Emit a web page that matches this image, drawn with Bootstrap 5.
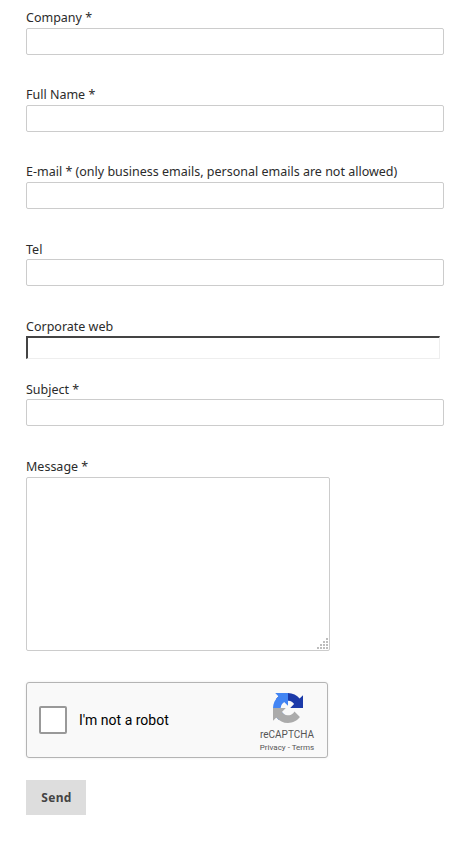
<!DOCTYPE html>
<html lang="en">
<head>
<meta charset="utf-8">
<title>Contact form</title>
<link rel="stylesheet" href="https://cdn.jsdelivr.net/npm/bootstrap@5.3.0/dist/css/bootstrap.min.css">
<style>
html, body { background: #fff; }
body { font-family: "Noto Sans", "Open Sans", sans-serif; font-size: 12.5px; color: #2b2b2b; overflow: hidden; }
.contact-form { padding: 8px 27px 0 26px; }
.field-block { margin-bottom: 30px; }
.field-block.tight { margin-bottom: 20px; }
.field-label { display: block; height: 20px; line-height: 19px; margin: 0; font-size: 12.5px; color: #2b2b2b; }
.field-label.label-low { padding-top: 1px; }
.field-input.form-control { height: 27px; min-height: 0; padding: 2px 6px; font-size: 13px; border: 1px solid #ccc; border-radius: 2px; box-shadow: none; }
.inset-input { display: block; width: 414px; height: 23px; padding: 1px 2px; background: #fff; border-style: solid; border-width: 2px 1px 1px 2px; border-color: #444 #eee #eee #444; border-radius: 0; outline: 0; }
.message-area.form-control { display: block; width: 304px; height: 174px; min-height: 0; margin-top: 1px; padding: 4px 6px; font-size: 13px; border: 1px solid #ccc; border-radius: 2px; resize: both; box-shadow: none; }
.message-area::-webkit-resizer { background: url("data:image/svg+xml,%3Csvg xmlns='http://www.w3.org/2000/svg' width='14' height='14'%3E%3Cg fill='%23bdbdbd'%3E%3Crect x='11' y='2' width='2' height='2'/%3E%3Crect x='11' y='5' width='2' height='2'/%3E%3Crect x='8' y='5' width='2' height='2'/%3E%3Crect x='11' y='8' width='2' height='2'/%3E%3Crect x='8' y='8' width='2' height='2'/%3E%3Crect x='5' y='8' width='2' height='2'/%3E%3Crect x='11' y='11' width='2' height='2'/%3E%3Crect x='8' y='11' width='2' height='2'/%3E%3Crect x='5' y='11' width='2' height='2'/%3E%3Crect x='2' y='11' width='2' height='2'/%3E%3C/g%3E%3C/svg%3E") no-repeat right bottom; }
.captcha-box { width: 302px; height: 76px; margin-top: 31px; margin-bottom: 22px; padding: 0 12px; background: #f9f9f9; border: 1px solid #b4b4b4; border-radius: 3px; box-shadow: 0 0 3px rgba(0,0,0,.08); font-family: Roboto, "Liberation Sans", sans-serif; color: #000; }
.captcha-check { width: 28px; height: 28px; background: #fff; border: 2px solid #999; border-radius: 2px; flex: none; }
.captcha-text { margin-left: 12px; font-size: 14px; }
.captcha-brand { width: 56px; padding-top: 10px; }
.captcha-logo { width: 30px; height: 30px; display: block; margin-left: 2px; }
.captcha-name { margin-top: 5px; font-size: 10px; line-height: 13px; color: #555; }
.captcha-links { margin-top: 1px; font-size: 8px; line-height: 12px; color: #555; white-space: nowrap; }
.send-btn.btn { width: 60px; height: 35px; padding: 0 0 0 1px; font-size: 12px; font-weight: 700; letter-spacing: .3px; color: #444; background: #ddd; border: 1px solid #ddd; border-radius: 0; }
</style>
</head>
<body>
<form class="contact-form" onsubmit="return false">
  <div class="field-block">
    <label class="field-label" for="f1">Company *</label>
    <input id="f1" class="form-control field-input" type="text">
  </div>
  <div class="field-block">
    <label class="field-label" for="f2">Full Name *</label>
    <input id="f2" class="form-control field-input" type="text">
  </div>
  <div class="field-block">
    <label class="field-label" for="f3">E-mail * (only business emails, personal emails are not allowed)</label>
    <input id="f3" class="form-control field-input" type="text">
  </div>
  <div class="field-block">
    <label class="field-label label-low" for="f4">Tel</label>
    <input id="f4" class="form-control field-input" type="text">
  </div>
  <div class="field-block tight">
    <label class="field-label label-low" for="f5">Corporate web</label>
    <input id="f5" class="inset-input" type="text">
  </div>
  <div class="field-block">
    <label class="field-label label-low" for="f6">Subject *</label>
    <input id="f6" class="form-control field-input" type="text">
  </div>
  <div>
    <label class="field-label label-low" for="f7">Message *</label>
    <textarea id="f7" class="form-control message-area"></textarea>
  </div>
  <div class="captcha-box d-flex align-items-start">
    <div class="d-flex align-items-center flex-grow-1 h-100">
      <div class="captcha-check"></div>
      <div class="captcha-text">I'm not a robot</div>
    </div>
    <div class="captcha-brand d-flex flex-column align-items-center text-center">
      <svg class="captcha-logo" viewBox="0 0 64 64" aria-hidden="true">
        <defs><path id="rc-arm" d="M64 32V4.7l-7.2 7.2C51 4.7 42 0 32 0 21.6 0 12.4 5 6.6 12.7l11.7 11.9c1.2-2.2 2.8-3.9 4.7-5.3 2-1.6 5-2.9 9-2.9.5 0 .9.1 1.1.2 5 .4 9.3 3.1 11.9 7.1L36.7 32z"/></defs>
        <use href="#rc-arm" fill="#1c3aa9"/>
        <use href="#rc-arm" fill="#4285f4" transform="rotate(-90 32 32)"/>
        <use href="#rc-arm" fill="#ababab" transform="rotate(180 32 32)"/>
      </svg>
      <div class="captcha-name">reCAPTCHA</div>
      <div class="captcha-links">Privacy - Terms</div>
    </div>
  </div>
  <button class="btn send-btn" type="submit">Send</button>
</form>
<script src="https://cdn.jsdelivr.net/npm/bootstrap@5.3.0/dist/js/bootstrap.bundle.min.js"></script>
</body>
</html>
